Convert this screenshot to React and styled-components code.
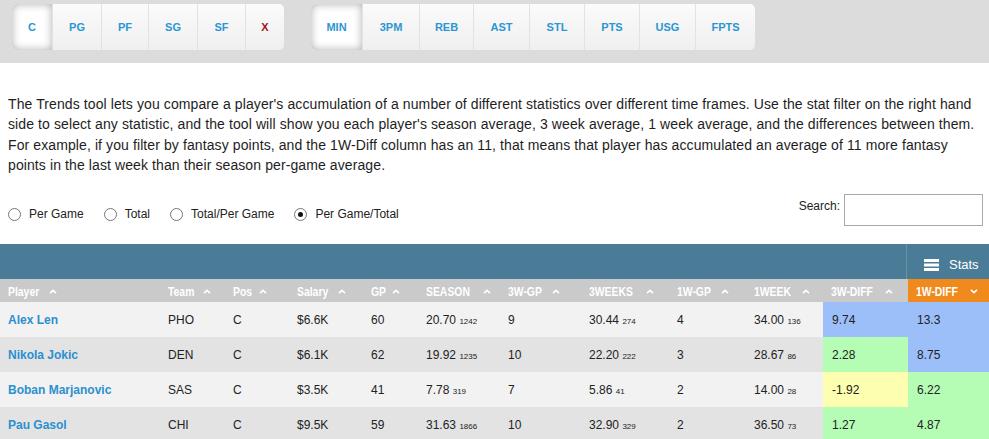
import React from 'react';
import styled, { createGlobalStyle } from 'styled-components';

const GlobalStyle = createGlobalStyle`
    body {
        margin: 0;
        background: #fff;
        font-family: "Liberation Sans", Arial, sans-serif;
        color: #222;
    }
`;

const positions = ['C', 'PG', 'PF', 'SG', 'SF', 'X'];
const posWidths = [40, 49, 47, 49, 48, 39];
const stats = ['MIN', '3PM', 'REB', 'AST', 'STL', 'PTS', 'USG', 'FPTS'];
const statWidths = [51, 57, 54, 56, 55, 55, 56, 60];

const columns = [
    { key: 'player', label: 'Player', width: 160 },
    { key: 'team', label: 'Team', width: 65 },
    { key: 'pos', label: 'Pos', width: 64 },
    { key: 'salary', label: 'Salary', width: 74 },
    { key: 'gp', label: 'GP', width: 55 },
    { key: 'season', label: 'SEASON', width: 82 },
    { key: 'gp3', label: '3W-GP', width: 81 },
    { key: 'weeks3', label: '3WEEKS', width: 88 },
    { key: 'gp1', label: '1W-GP', width: 77 },
    { key: 'week1', label: '1WEEK', width: 77 },
    { key: 'diff3', label: '3W-DIFF', width: 85 },
    { key: 'diff1', label: '1W-DIFF', width: 81 },
];

const rows = [
    { player: 'Alex Len', team: 'PHO', pos: 'C', salary: '$6.6K', gp: 60, season: ['20.70', '1242'], gp3: 9, weeks3: ['30.44', '274'], gp1: 4, week1: ['34.00', '136'], diff3: ['9.74', 'blue'], diff1: ['13.3', 'blue'] },
    { player: 'Nikola Jokic', team: 'DEN', pos: 'C', salary: '$6.1K', gp: 62, season: ['19.92', '1235'], gp3: 10, weeks3: ['22.20', '222'], gp1: 3, week1: ['28.67', '86'], diff3: ['2.28', 'green'], diff1: ['8.75', 'blue'] },
    { player: 'Boban Marjanovic', team: 'SAS', pos: 'C', salary: '$3.5K', gp: 41, season: ['7.78', '319'], gp3: 7, weeks3: ['5.86', '41'], gp1: 2, week1: ['14.00', '28'], diff3: ['-1.92', 'yellow'], diff1: ['6.22', 'green'] },
    { player: 'Pau Gasol', team: 'CHI', pos: 'C', salary: '$9.5K', gp: 59, season: ['31.63', '1866'], gp3: 10, weeks3: ['32.90', '329'], gp1: 2, week1: ['36.50', '73'], diff3: ['1.27', 'green'], diff1: ['4.87', 'green'] },
];

const diffColors = {
    blue: '#9dbff9',
    green: '#b5fdb5',
    yellow: '#fefeb0',
};

const radios = [
    { label: 'Per Game' },
    { label: 'Total' },
    { label: 'Total/Per Game' },
    { label: 'Per Game/Total', checked: true },
];

const UpArrow = () => (
    <svg width="8" height="5" viewBox="0 0 8 5">
        <path d="M1 4.2 L4 1.3 L7 4.2" fill="none" stroke="#fff" strokeWidth="1.6" />
    </svg>
);

const DownArrow = () => (
    <svg width="8" height="5" viewBox="0 0 8 5">
        <path d="M1 0.8 L4 3.7 L7 0.8" fill="none" stroke="#fff" strokeWidth="1.6" />
    </svg>
);

const MenuIcon = () => (
    <svg width="15" height="12" viewBox="0 0 15 12">
        <rect x="0" y="0" width="15" height="3" fill="#fff" />
        <rect x="0" y="4.5" width="15" height="3" fill="#fff" />
        <rect x="0" y="9" width="15" height="3" fill="#fff" />
    </svg>
);

export default function App() {
    return (
        <Page>
            <GlobalStyle />
            <FilterBar>
                <ButtonGroup>
                    {positions.map((p, i) => (
                        <FilterButton key={p} $w={posWidths[i]} $active={i === 0} $danger={p === 'X'}>{p}</FilterButton>
                    ))}
                </ButtonGroup>
                <ButtonGroup>
                    {stats.map((s, i) => (
                        <FilterButton key={s} $w={statWidths[i]} $active={i === 0}>{s}</FilterButton>
                    ))}
                </ButtonGroup>
            </FilterBar>

            <Intro>
                The Trends tool lets you compare a player's accumulation of a number of different statistics over different time frames. Use the stat filter on the right hand side to select any statistic, and the tool will show you each player's season average, 3 week average, 1 week average, and the differences between them. For example, if you filter by fantasy points, and the 1W-Diff column has an 11, that means that player has accumulated an average of 11 more fantasy points in the last week than their season per-game average.
            </Intro>

            <ControlsRow>
                <RadioGroup>
                    {radios.map(r => (
                        <RadioLabel key={r.label}>
                            <RadioCircle $checked={r.checked} />
                            {r.label}
                        </RadioLabel>
                    ))}
                </RadioGroup>
                <SearchBox>
                    <span>Search:</span>
                    <SearchInput type="text" />
                </SearchBox>
            </ControlsRow>

            <TableBar>
                <StatsToggle>
                    <MenuIcon />
                    <span>Stats</span>
                </StatsToggle>
            </TableBar>

            <Table>
                <colgroup>
                    {columns.map(c => <col key={c.key} style={{ width: c.width }} />)}
                </colgroup>
                <thead>
                    <tr>
                        {columns.map(c => (
                            <HeadCell key={c.key} $sorted={c.key === 'diff1'}>
                                <HeadLabel>{c.label}</HeadLabel>
                                <ArrowSpan>{c.key === 'diff1' ? <DownArrow /> : <UpArrow />}</ArrowSpan>
                            </HeadCell>
                        ))}
                    </tr>
                </thead>
                <tbody>
                    {rows.map((r, i) => (
                        <BodyRow key={r.player} $odd={i % 2 === 1}>
                            <Cell><PlayerName>{r.player}</PlayerName></Cell>
                            <Cell>{r.team}</Cell>
                            <Cell>{r.pos}</Cell>
                            <Cell>{r.salary}</Cell>
                            <Cell>{r.gp}</Cell>
                            <Cell>{r.season[0]} <Tiny>{r.season[1]}</Tiny></Cell>
                            <Cell>{r.gp3}</Cell>
                            <Cell>{r.weeks3[0]} <Tiny>{r.weeks3[1]}</Tiny></Cell>
                            <Cell>{r.gp1}</Cell>
                            <Cell>{r.week1[0]} <Tiny>{r.week1[1]}</Tiny></Cell>
                            <DiffCell $tone={r.diff3[1]}>{r.diff3[0]}</DiffCell>
                            <DiffCell $tone={r.diff1[1]}>{r.diff1[0]}</DiffCell>
                        </BodyRow>
                    ))}
                </tbody>
            </Table>
        </Page>
    );
}

const Page = styled.div`
    width: 989px;
    overflow: hidden;
`;

const FilterBar = styled.div`
    display: flex;
    gap: 27px;
    height: 63px;
    padding: 4px 0 0 12px;
    box-sizing: border-box;
    background: #dcdcdc;
`;

const ButtonGroup = styled.div`
    display: flex;
    height: 46px;
    border-radius: 5px;
    overflow: hidden;
    background: linear-gradient(#fbfbfb, #efefef);
`;

const FilterButton = styled.div`
    width: ${p => p.$w}px;
    display: flex;
    align-items: center;
    justify-content: center;
    font-size: 11px;
    font-weight: bold;
    color: ${p => p.$danger ? '#a01818' : '#2b96d3'};
    border-left: 1px solid #e2e2e2;
    box-sizing: border-box;
    background: ${p => p.$active ? '#fff' : 'transparent'};
    box-shadow: ${p => p.$active ? 'inset 0 0 8px rgba(0,0,0,0.32)' : 'none'};
    border-radius: ${p => p.$active ? '5px 0 0 5px' : '0'};
    &:first-child {
        border-left: none;
    }
`;

const Intro = styled.p`
    margin: 31px 0 0 0;
    padding: 0 4px 0 8px;
    font-size: 14px;
    letter-spacing: 0.1px;
    line-height: 20.3px;
    color: #1e1e1e;
`;

const ControlsRow = styled.div`
    display: flex;
    justify-content: space-between;
    align-items: flex-start;
    margin-top: 19px;
    height: 50px;
    padding: 0 6px 0 8px;
`;

const RadioGroup = styled.div`
    display: flex;
    gap: 20px;
    padding-top: 13px;
`;

const RadioLabel = styled.label`
    display: flex;
    align-items: center;
    gap: 8px;
    font-size: 12px;
    color: #222;
`;

const RadioCircle = styled.span`
    width: 11px;
    height: 11px;
    border: 1px solid #777;
    border-radius: 50%;
    background: #fff;
    display: inline-flex;
    align-items: center;
    justify-content: center;
    &::after {
        content: '';
        width: 5px;
        height: 5px;
        border-radius: 50%;
        background: ${p => p.$checked ? '#111' : 'transparent'};
    }
`;

const SearchBox = styled.div`
    display: flex;
    align-items: flex-start;
    gap: 4px;
    font-size: 12px;
    color: #222;
    span {
        padding-top: 5px;
    }
`;

const SearchInput = styled.input`
    width: 139px;
    height: 32px;
    box-sizing: border-box;
    border: 1px solid #a9a9a9;
    outline: none;
`;

const TableBar = styled.div`
    display: flex;
    justify-content: flex-end;
    height: 35px;
    background: #4b7c97;
`;

const StatsToggle = styled.div`
    width: 83px;
    display: flex;
    align-items: center;
    gap: 10px;
    padding-left: 17px;
    box-sizing: border-box;
    border-left: 1px solid #6a93aa;
    color: #fff;
    font-size: 13px;
    padding-top: 6px;
`;

const Table = styled.table`
    width: 989px;
    table-layout: fixed;
    border-collapse: collapse;
`;

const HeadCell = styled.th`
    height: 23px;
    padding: 0 0 0 8px;
    text-align: left;
    white-space: nowrap;
    background: ${p => p.$sorted ? '#f08a1d' : '#cacaca'};
`;

const HeadLabel = styled.span`
    display: inline-block;
    font-size: 13px;
    font-weight: bold;
    color: #fff;
    transform: scaleX(0.8);
    transform-origin: left center;
    margin-right: -${p => 0}px;
`;

const ArrowSpan = styled.span`
    display: inline-block;
    margin-left: 2px;
    vertical-align: 2px;
    svg {
        display: block;
    }
`;

const BodyRow = styled.tr`
    height: 35px;
    background: ${p => p.$odd ? '#e3e3e3' : '#f2f2f2'};
`;

const Cell = styled.td`
    padding: 0 0 0 8px;
    font-size: 12px;
    color: #222;
    white-space: nowrap;
`;

const DiffCell = styled(Cell)`
    background: ${p => diffColors[p.$tone]};
    padding-left: 9px;
`;

const PlayerName = styled.span`
    font-weight: bold;
    color: #2b8fd0;
`;

const Tiny = styled.span`
    font-size: 8px;
`;
